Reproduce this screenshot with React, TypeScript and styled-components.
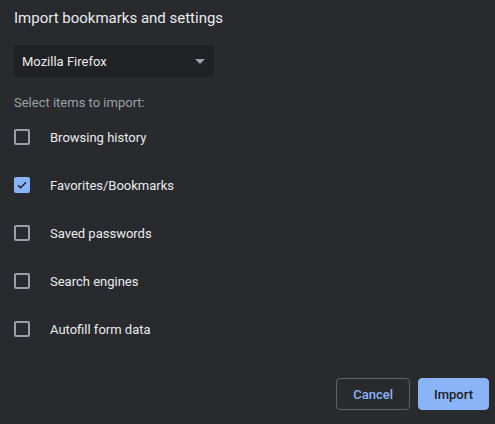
import React, { useState } from "react";
import styled, { createGlobalStyle } from "styled-components";

const Global = createGlobalStyle`
  html, body { margin: 0; padding: 0; background: #292a2d; }
  body { font-family: Roboto, "Noto Sans", "Liberation Sans", sans-serif; }
  * { box-sizing: border-box; }
`;

const Dialog = styled.div`
  width: 495px;
  height: 424px;
  background: #292a2d;
  padding: 0 6px 14px 14px;
  display: flex;
  flex-direction: column;
`;

const Title = styled.h1`
  margin: 0;
  height: 36px;
  line-height: 36px;
  font-size: 15px;
  font-weight: 400;
  color: #e8eaed;
`;

const SelectBox = styled.div`
  margin-top: 9px;
  width: 200px;
  height: 32px;
  border-radius: 4px;
  background: #202124;
  display: flex;
  align-items: center;
  justify-content: space-between;
  padding: 0 9px 0 8px;
  font-size: 13px;
  color: #e8eaed;
`;

const Arrow = styled.span`
  width: 0;
  height: 0;
  border-left: 5px solid transparent;
  border-right: 5px solid transparent;
  border-top: 5px solid #9aa0a6;
  margin-top: 1px;
`;

const SectionLabel = styled.div`
  margin-top: 18px;
  height: 16px;
  line-height: 16px;
  font-size: 13px;
  color: #9aa0a6;
`;

const List = styled.div`
  margin-top: 2px;
  display: flex;
  flex-direction: column;
`;

const Row = styled.label`
  height: 48px;
  display: flex;
  align-items: center;
  gap: 20px;
  cursor: pointer;
  font-size: 13px;
  color: #e8eaed;
`;

const Box = styled.span<{ $checked: boolean }>`
  width: 16px;
  height: 16px;
  border-radius: 2px;
  border: 2px solid ${(p) => (p.$checked ? "#8ab4f8" : "#9aa0a6")};
  background: ${(p) => (p.$checked ? "#8ab4f8" : "transparent")};
  display: flex;
  align-items: center;
  justify-content: center;
  flex-shrink: 0;
`;

const Footer = styled.div`
  margin-top: auto;
  display: flex;
  justify-content: flex-end;
  gap: 8px;
`;

const Button = styled.button<{ $primary?: boolean }>`
  height: 32px;
  padding: 0 ${(p) => (p.$primary ? "15px" : "16px")};
  border-radius: 4px;
  font-family: inherit;
  font-size: 13px;
  font-weight: 500;
  border: 1px solid ${(p) => (p.$primary ? "#8ab4f8" : "#5f6368")};
  background: ${(p) => (p.$primary ? "#8ab4f8" : "transparent")};
  color: ${(p) => (p.$primary ? "#202124" : "#8ab4f8")};
  cursor: pointer;
`;

const items = [
  { label: "Browsing history", checked: false },
  { label: "Favorites/Bookmarks", checked: true },
  { label: "Saved passwords", checked: false },
  { label: "Search engines", checked: false },
  { label: "Autofill form data", checked: false },
];

export default function App() {
  const [state, setState] = useState(items.map((i) => i.checked));
  return (
    <>
      <Global />
      <Dialog>
        <Title>Import bookmarks and settings</Title>
        <SelectBox>
          <span>Mozilla Firefox</span>
          <Arrow />
        </SelectBox>
        <SectionLabel>Select items to import:</SectionLabel>
        <List>
          {items.map((it, i) => (
            <Row key={it.label} onClick={() => setState((s) => s.map((v, j) => (j === i ? !v : v)))}>
              <Box $checked={state[i]}>
                {state[i] && (
                  <svg width="12" height="12" viewBox="0 0 24 24">
                    <path d="M4 12.5l5 5L20 6.5" fill="none" stroke="#202124" strokeWidth="3" />
                  </svg>
                )}
              </Box>
              <span>{it.label}</span>
            </Row>
          ))}
        </List>
        <Footer>
          <Button>Cancel</Button>
          <Button $primary>Import</Button>
        </Footer>
      </Dialog>
    </>
  );
}
